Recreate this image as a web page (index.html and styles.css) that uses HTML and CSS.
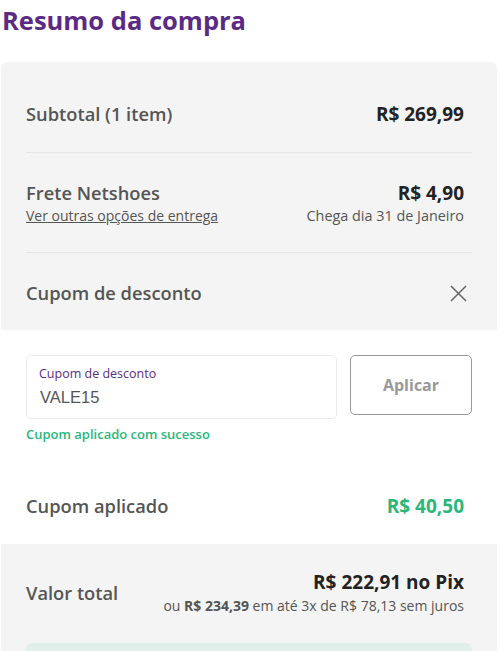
FILE: index.html
```html
<!DOCTYPE html>
<html lang="pt-BR">

<head>
    <meta charset="UTF-8" />
    <title>Resumo da compra</title>
    <link rel="stylesheet" href="styles.css">
</head>

<body>
    <div class="page">
        <h1 class="title">Resumo da compra</h1>
        <div class="card">
            <div class="row row-sub">
                <span class="label">Subtotal (1 item)</span>
                <span class="value">R$ 269,99</span>
            </div>
            <div class="row row-frete">
                <div class="col">
                    <span class="label">Frete Netshoes</span>
                    <a class="link" href="#">Ver outras opções de entrega</a>
                </div>
                <div class="col col-right">
                    <span class="value">R$ 4,90</span>
                    <span class="note">Chega dia 31 de Janeiro</span>
                </div>
            </div>
            <div class="row row-cupom">
                <span class="label">Cupom de desconto</span>
                <svg class="close" width="17" height="17" viewBox="0 0 17 17">
                    <path d="M1 1L16 16M16 1L1 16" stroke="#666" stroke-width="1.5" fill="none" />
                </svg>
            </div>
            <div class="coupon">
                <div class="coupon-form">
                    <div class="field">
                        <span class="field-label">Cupom de desconto</span>
                        <span class="field-value">VALE15</span>
                    </div>
                    <button class="btn">Aplicar</button>
                </div>
                <p class="success">Cupom aplicado com sucesso</p>
                <div class="applied">
                    <span class="label">Cupom aplicado</span>
                    <span class="value green">R$ 40,50</span>
                </div>
            </div>
            <div class="row row-total">
                <span class="label">Valor total</span>
                <div class="col col-right">
                    <span class="pix">R$ 222,91 no Pix</span>
                    <span class="install">ou <b>R$ 234,39</b> em até 3x de R$ 78,13 sem juros</span>
                </div>
            </div>
            <div class="banner"></div>
        </div>
    </div>
</body>

</html>
```

FILE: styles.css
```css
* {
    margin: 0;
    padding: 0;
    box-sizing: border-box;
}

body {
    font-family: "Source Sans Pro", "Open Sans", Lato, sans-serif;
    background: #fff;
    color: #555;
}

.page {
    padding: 0 3px 0 1px;
}

.title {
    font-size: 25.5px;
    line-height: 40px;
    font-weight: 700;
    color: #5b2a83;
    margin: 0 0 22px 1px;
}

.card {
    background: #f4f4f4;
    border-radius: 6px;
    overflow: hidden;
}

.row {
    display: flex;
    justify-content: space-between;
    align-items: center;
    margin: 0 25px;
}

.label {
    font-size: 18.3px;
    line-height: 24px;
    color: #555;
    font-weight: 600;
}

.value {
    font-size: 19px;
    line-height: 24px;
    font-weight: 700;
    color: #222;
    margin-right: 8px;
}

.row-sub {
    padding: 40px 0 26px;
    border-bottom: 1px solid #e4e4e4;
}

.row-frete {
    padding: 28px 0 25px;
    border-bottom: 1px solid #e4e4e4;
    align-items: flex-start;
}

.col {
    display: flex;
    flex-direction: column;
}

.col-right {
    align-items: flex-end;
    margin-right: 8px;
}

.col-right .value {
    margin-right: 0;
}

.link {
    font-size: 14px;
    line-height: 22px;
    color: #555;
    text-decoration: underline;
}

.note {
    font-size: 14.4px;
    line-height: 22px;
    color: #555;
}

.row-cupom {
    padding: 28px 0 25px;
}

.close {
    margin-right: 5px;
}

.coupon {
    background: #fff;
    padding: 25px 25px 26px;
}

.coupon-form {
    display: flex;
    gap: 13px;
    align-items: flex-start;
}

.field {
    flex: 1;
    height: 64px;
    border: 1px solid #ebebeb;
    border-radius: 5px;
    padding: 9px 12px 0;
    display: flex;
    flex-direction: column;
}

.field-label {
    font-size: 12.5px;
    line-height: 17px;
    color: #5b2a83;
}

.field-value {
    font-family: "Liberation Sans", Arial, sans-serif;
    font-size: 16.5px;
    line-height: 22px;
    margin-top: 4px;
    color: #555;
    padding-left: 1px;
}

.btn {
    width: 122px;
    height: 60px;
    border: 1px solid #999;
    border-radius: 5px;
    background: #fff;
    font-family: inherit;
    font-size: 16px;
    font-weight: 700;
    color: #999;
}

.success {
    margin-top: 6px;
    font-size: 13px;
    line-height: 18px;
    font-weight: 600;
    color: #2bb77c;
}

.applied {
    display: flex;
    justify-content: space-between;
    align-items: center;
    margin-top: 51px;
}

.green {
    color: #2bb77c;
}

.row-total {
    padding: 25px 0 26px;
}

.pix {
    font-size: 19px;
    line-height: 26px;
    font-weight: 700;
    color: #222;
}

.install {
    font-size: 14px;
    line-height: 22px;
    color: #555;
}

.install b {
    font-weight: 700;
}

.banner {
    margin: 0 25px;
    height: 40px;
    background: #e0efe9;
    border-radius: 6px 6px 0 0;
}
```
